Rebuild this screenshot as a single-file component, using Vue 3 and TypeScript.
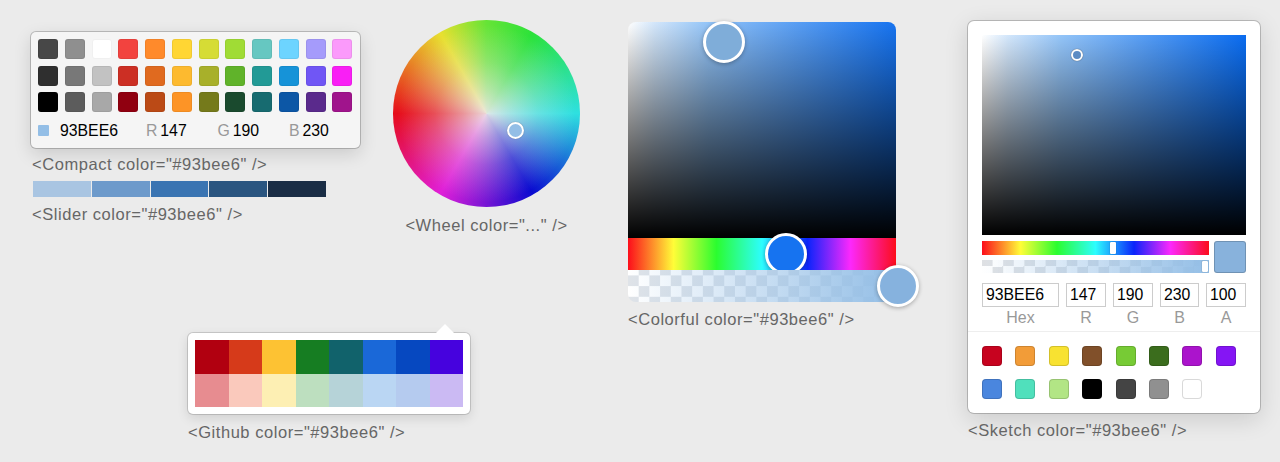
<script setup lang="ts">
const color = '#93bee6'

const compactRows = [
  ['#474747', '#8f8f8f', '#ffffff', '#f2433f', '#ff8a2b', '#ffd633', '#d6dc35', '#a0dc35', '#66c7c1', '#6dd4ff', '#a59bfb', '#fb9afb'],
  ['#2f2f2f', '#787878', '#c2c2c2', '#cc2f24', '#e06a1f', '#fdba2f', '#a8b02a', '#60b32a', '#229a96', '#1693d8', '#7056f5', '#f91ff5'],
  ['#000000', '#5c5c5c', '#a8a8a8', '#900010', '#bb4a16', '#fd9426', '#757a1b', '#1a4a2e', '#176b70', '#0c57a6', '#5a2a8c', '#a0148c'],
]
const compactFields = [
  { label: 'R', value: 147 },
  { label: 'G', value: 190 },
  { label: 'B', value: 230 },
]
const sliderShades = ['#a9c5e2', '#6d9acb', '#3a74b2', '#2a5580', '#1a2d45']
const githubColors = [
  '#b10010', '#d63a1a', '#fdc233', '#167d22', '#11626b', '#1a68d8', '#0648c0', '#4602de',
  '#e78c90', '#fac9bc', '#fdefb3', '#bddfbf', '#b6d3d8', '#bad6f3', '#b5cbef', '#cbbaf3',
]
const sketchFields = [
  { label: 'Hex', value: '93BEE6' },
  { label: 'R', value: '147' },
  { label: 'G', value: '190' },
  { label: 'B', value: '230' },
  { label: 'A', value: '100' },
]
const sketchPresets = [
  '#c7031f', '#f29c38', '#f8e231', '#81502a', '#77cb35', '#3b6d1d', '#ab14cc', '#8515f4',
  '#4a86de', '#50e0bc', '#b2e585', '#000000', '#444444', '#909090', '#ffffff',
]
</script>

<template>
  <main class="page">
    <section class="left">
      <div class="top-row">
        <div class="compact-col">
          <div class="compact">
            <div v-for="(row, i) in compactRows" :key="i" class="compact-row">
              <span v-for="c in row" :key="c" class="compact-swatch" :style="{ background: c }" />
            </div>
            <div class="compact-values">
              <span class="compact-dot" :style="{ background: color }" />
              <span class="compact-hex">93BEE6</span>
              <span v-for="f in compactFields" :key="f.label" class="compact-field">
                <em>{{ f.label }}</em> {{ f.value }}
              </span>
            </div>
          </div>
          <p class="caption compact-caption">&lt;Compact color="#93bee6" /&gt;</p>
          <div class="slider">
            <span v-for="s in sliderShades" :key="s" :style="{ background: s }" />
          </div>
          <p class="caption slider-caption">&lt;Slider color="#93bee6" /&gt;</p>
        </div>
        <div class="wheel-col">
          <div class="wheel">
            <span class="wheel-handle" />
          </div>
          <p class="caption wheel-caption">&lt;Wheel color="..." /&gt;</p>
        </div>
      </div>
      <div class="github-col">
        <div class="github">
          <span class="github-arrow" />
          <span v-for="c in githubColors" :key="c" :style="{ background: c }" />
        </div>
        <p class="caption github-caption">&lt;Github color="#93bee6" /&gt;</p>
      </div>
    </section>

    <section class="colorful-col">
      <div class="colorful">
        <div class="colorful-sat">
          <span class="big-handle sat-handle" />
        </div>
        <div class="colorful-hue">
          <span class="big-handle hue-handle" />
        </div>
        <div class="colorful-alpha">
          <span class="big-handle alpha-handle" />
        </div>
      </div>
      <p class="caption colorful-caption">&lt;Colorful color="#93bee6" /&gt;</p>
    </section>

    <section class="sketch-col">
      <div class="sketch">
        <div class="sketch-main">
          <div class="sketch-sat">
            <span class="sketch-pointer" />
          </div>
          <div class="sketch-controls">
            <div class="sketch-bars">
              <div class="sketch-hue"><span class="sketch-thumb hue-thumb" /></div>
              <div class="sketch-alpha"><span class="sketch-thumb alpha-thumb" /></div>
            </div>
            <span class="sketch-preview" />
          </div>
          <div class="sketch-fields">
            <label v-for="f in sketchFields" :key="f.label" class="sketch-field">
              <span class="sketch-input">{{ f.value }}</span>
              <span class="sketch-label">{{ f.label }}</span>
            </label>
          </div>
        </div>
        <div class="sketch-presets">
          <span v-for="c in sketchPresets" :key="c" :style="{ background: c }" />
        </div>
      </div>
      <p class="caption sketch-caption">&lt;Sketch color="#93bee6" /&gt;</p>
    </section>
  </main>
</template>

<style>
html,
body {
  margin: 0;
  background: #ebebeb;
}
</style>

<style scoped>
.page {
  display: flex;
  width: 1280px;
  height: 462px;
  overflow: hidden;
  font-family: 'Liberation Sans', Arial, sans-serif;
  color: #000;
}

.caption {
  margin: 0;
  font-size: 16.5px;
  letter-spacing: 0.55px;
  line-height: 18px;
  color: #666;
  white-space: nowrap;
}

.left {
  width: 628px;
  flex: none;
}

.top-row {
  display: flex;
  height: 333px;
}

.compact-col {
  width: 362px;
  padding: 32px 0 0 31px;
  box-sizing: border-box;
  flex: none;
}

.compact {
  width: 328.5px;
  height: 116px;
  box-sizing: border-box;
  padding: 7px;
  background: #f5f5f5;
  border-radius: 5px;
  box-shadow: 0 0 0 1px rgba(0, 0, 0, 0.2), 0 6px 18px rgba(0, 0, 0, 0.14);
}

.compact-row {
  display: flex;
  justify-content: space-between;
  margin-bottom: 6.6px;
}

.compact-swatch {
  width: 20px;
  height: 20px;
  border-radius: 3px;
  box-shadow: inset 0 0 0 1px rgba(0, 0, 0, 0.06);
}

.compact-values {
  display: flex;
  align-items: center;
  height: 24px;
  margin-top: 7px;
  font-size: 15.8px;
}

.compact-dot {
  flex: none;
  width: 11px;
  height: 11px;
  margin-right: 11px;
  margin-top: -2px;
  border-radius: 1px;
}

.compact-hex {
  flex: none;
  width: 86px;
}

.compact-field {
  flex: none;
  width: 71.5px;
  word-spacing: -1.5px;
}

.compact-field em {
  font-style: normal;
  color: #999;
}

.compact-caption {
  margin: 7px 0 0 1px;
}

.slider {
  display: flex;
  gap: 1px;
  width: 293px;
  height: 16px;
  margin: 8px 0 0 2px;
}

.slider span {
  flex: 1;
}

.slider-caption {
  margin: 8px 0 0 1px;
}

.wheel-col {
  width: 266px;
  padding: 20px 0 0 31px;
  box-sizing: border-box;
}

.wheel {
  position: relative;
  width: 187px;
  height: 187px;
  border-radius: 50%;
  background:
    radial-gradient(closest-side, rgba(236, 232, 232, 0.92) 0%, rgba(236, 232, 232, 0.62) 25%, rgba(236, 232, 232, 0.3) 55%, rgba(236, 232, 232, 0) 95%),
    conic-gradient(from 0deg, #66e436 0deg, #2be23a 30deg, #2ee0e0 90deg, #0a0ad0 150deg, #e01fd8 210deg, #e60d1a 270deg, #e8e030 330deg, #66e436 360deg);
}

.wheel-handle {
  position: absolute;
  left: 114px;
  top: 102px;
  width: 13px;
  height: 13px;
  border: 2px solid #fff;
  border-radius: 50%;
  background: #93bee6;
  box-shadow: 0 0 1px rgba(0, 0, 0, 0.4);
}

.wheel-caption {
  margin: 9px 0 0;
  width: 187px;
  text-align: center;
}

.github-col {
  padding-left: 188px;
}

.github {
  position: relative;
  display: grid;
  grid-template-columns: repeat(8, 1fr);
  grid-auto-rows: 33.5px;
  width: 282px;
  height: 81px;
  box-sizing: border-box;
  padding: 7px;
  background: #fff;
  border-radius: 5px;
  box-shadow: 0 0 0 1px rgba(0, 0, 0, 0.14), 0 4px 12px rgba(0, 0, 0, 0.12);
}

.github-arrow {
  position: absolute;
  right: 16px;
  top: -9px;
  width: 0;
  height: 0;
  border: 9px solid transparent;
  border-top: 0;
  border-bottom-color: #fff;
}

.github-caption {
  margin: 9px 0 0;
}

.colorful-col {
  width: 340px;
  flex: none;
  padding-top: 22px;
}

.colorful {
  width: 268px;
}

.colorful-sat {
  position: relative;
  height: 216px;
  border-radius: 8px 8px 0 0;
  background:
    linear-gradient(to top, #000, rgba(0, 0, 0, 0)),
    linear-gradient(to right, #fff 0%, #d2e6fb 10%, #93c4f8 30%, #1673f0 100%);
}

.colorful-hue {
  position: relative;
  height: 32px;
  background: linear-gradient(to right, #fc0d1b 0%, #fffd38 17%, #2bfd2f 33%, #2dfdfe 50%, #0b24fb 67%, #fc28fc 83%, #fc0d1b 100%);
}

.colorful-alpha {
  position: relative;
  height: 32px;
  border-radius: 0 0 8px 8px;
  background:
    linear-gradient(to right, rgba(147, 190, 230, 0), #93bee6),
    repeating-conic-gradient(#dfe3e8 0 25%, #fff 0 50%) 0 -5.3px / 21.4px 21.4px;
}

.big-handle {
  position: absolute;
  width: 36px;
  height: 36px;
  border: 3px solid #fff;
  border-radius: 50%;
  box-shadow: 0 1px 4px rgba(0, 0, 0, 0.3);
}

.sat-handle {
  left: 75px;
  top: -1px;
  background: #7fadd9;
}

.hue-handle {
  left: 137px;
  top: -5px;
  background: #1673f0;
}

.alpha-handle {
  left: 249px;
  top: -5px;
  background: #86b2de;
}

.colorful-caption {
  margin-top: 8px;
}

.sketch-col {
  padding-top: 21px;
}

.sketch {
  width: 292px;
  height: 392px;
  box-sizing: border-box;
  background: #fff;
  border-radius: 6px;
  box-shadow: 0 0 0 1px rgba(0, 0, 0, 0.2), 0 6px 24px rgba(0, 0, 0, 0.14);
}

.sketch-main {
  height: 311px;
  box-sizing: border-box;
  padding: 14px 14px 0;
  border-bottom: 1px solid #eee;
}

.sketch-sat {
  position: relative;
  height: 200px;
  background:
    linear-gradient(to top, #000, rgba(0, 0, 0, 0)),
    linear-gradient(to right, #fff 0%, #d2e6fb 10%, #93c4f8 30%, #0a6cf0 100%);
}

.sketch-pointer {
  position: absolute;
  left: 89px;
  top: 14px;
  width: 8px;
  height: 8px;
  border: 2px solid #fff;
  border-radius: 50%;
  background: #5c8cc4;
  box-shadow: 0 0 1px rgba(0, 0, 0, 0.7);
}

.sketch-controls {
  display: flex;
  justify-content: space-between;
  margin-top: 6px;
}

.sketch-bars {
  display: flex;
  flex-direction: column;
  gap: 5px;
  width: 227px;
}

.sketch-hue,
.sketch-alpha {
  position: relative;
  height: 13.5px;
}

.sketch-hue {
  background: linear-gradient(to right, #fc0d1b 0%, #fffd38 17%, #2bfd2f 33%, #2dfdfe 50%, #0b24fb 67%, #fc28fc 83%, #fc0d1b 100%);
}

.sketch-alpha {
  background:
    linear-gradient(to right, rgba(147, 190, 230, 0), #93bee6),
    repeating-conic-gradient(#dfe1e4 0 25%, #fff 0 50%) 10.6px 0 / 21.2px 13.5px;
}

.sketch-thumb {
  position: absolute;
  top: 1px;
  width: 6px;
  height: 11.5px;
  background: #fff;
  border-radius: 1px;
  box-shadow: 0 0 1px rgba(0, 0, 0, 0.5);
}

.hue-thumb {
  left: 128px;
}

.alpha-thumb {
  left: 220px;
}

.sketch-preview {
  width: 32px;
  height: 32px;
  box-sizing: border-box;
  border: 1px solid rgba(0, 0, 0, 0.18);
  border-radius: 3px;
  background: #88b2dc;
}

.sketch-fields {
  display: grid;
  grid-template-columns: 77px 40px 40px 39px 40px;
  justify-content: space-between;
  margin-top: 10px;
}

.sketch-field {
  display: flex;
  flex-direction: column;
  align-items: center;
}

.sketch-input {
  width: 100%;
  height: 24px;
  box-sizing: border-box;
  padding-left: 3px;
  border: 1px solid #ccc;
  background: #fff;
  font-size: 15.8px;
  line-height: 22px;
}

.sketch-label {
  margin-top: 2px;
  font-size: 16px;
  line-height: 18px;
  color: #999;
}

.sketch-presets {
  display: grid;
  grid-template-columns: repeat(8, 20px);
  grid-auto-rows: 20px;
  column-gap: 13.4px;
  row-gap: 13.4px;
  padding: 14px 14px;
}

.sketch-presets span {
  border-radius: 4px;
  box-shadow: inset 0 0 0 1px rgba(0, 0, 0, 0.15);
}

.sketch-caption {
  margin-top: 8px;
}
</style>
